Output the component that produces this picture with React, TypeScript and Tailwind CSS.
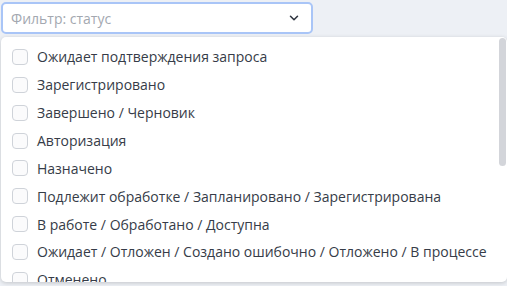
import React from "react";

const items = [
  "Ожидает подтверждения запроса",
  "Зарегистрировано",
  "Завершено / Черновик",
  "Авторизация",
  "Назначено",
  "Подлежит обработке / Запланировано / Зарегистрирована",
  "В работе / Обработано / Доступна",
  "Ожидает / Отложен / Создано ошибочно / Отложено / В процессе",
  "Отменено",
  "Закрыто",
  "Решено",
  "Отклонено",
  "Выполнено",
  "Архив",
  "Приостановлено",
  "Возвращено",
];

export default function App() {
  return (
    <div
      className="relative w-[507px] h-[286px] overflow-hidden bg-[#edf0f5]"
      style={{ fontFamily: '"Open Sans", "Noto Sans", sans-serif' }}
    >
      <div className="pt-[2px] pl-[1px]">
        <div className="flex items-center justify-between w-[312px] h-[32px] bg-white border-2 border-[#a9c5f7] rounded-[5px] pl-[8px] pr-[10px]">
          <span className="text-[14px] text-[#a3a8b0]">Фильтр: статус</span>
          <svg width="14" height="14" viewBox="0 0 24 24" fill="none" stroke="#2f3540" strokeWidth="2.6" strokeLinecap="round" strokeLinejoin="round">
            <path d="M6 9l6 6 6-6" />
          </svg>
        </div>
      </div>
      <div className="absolute top-[37px] left-[1px] w-[506px] h-[245px] bg-white rounded-[5px] shadow-[0_1px_4px_rgba(0,0,0,0.18)] overflow-hidden">
        <div className="h-full overflow-y-auto py-[6px] [scrollbar-width:none]">
          {items.map((t) => (
            <label key={t} className="flex items-center h-[27.86px] pl-[11px] gap-[9px] cursor-pointer">
              <span className="w-[16px] h-[16px] shrink-0 rounded-[4px] border border-[#cfd3d9] bg-[#fbfbfc]" />
              <span className="text-[14px] text-[#363c48] whitespace-nowrap">{t}</span>
            </label>
          ))}
        </div>
        <div className="absolute top-[1px] right-[1px] w-[7px] h-[128px] rounded-full bg-[#d3d5da]" />
      </div>
    </div>
  );
}
